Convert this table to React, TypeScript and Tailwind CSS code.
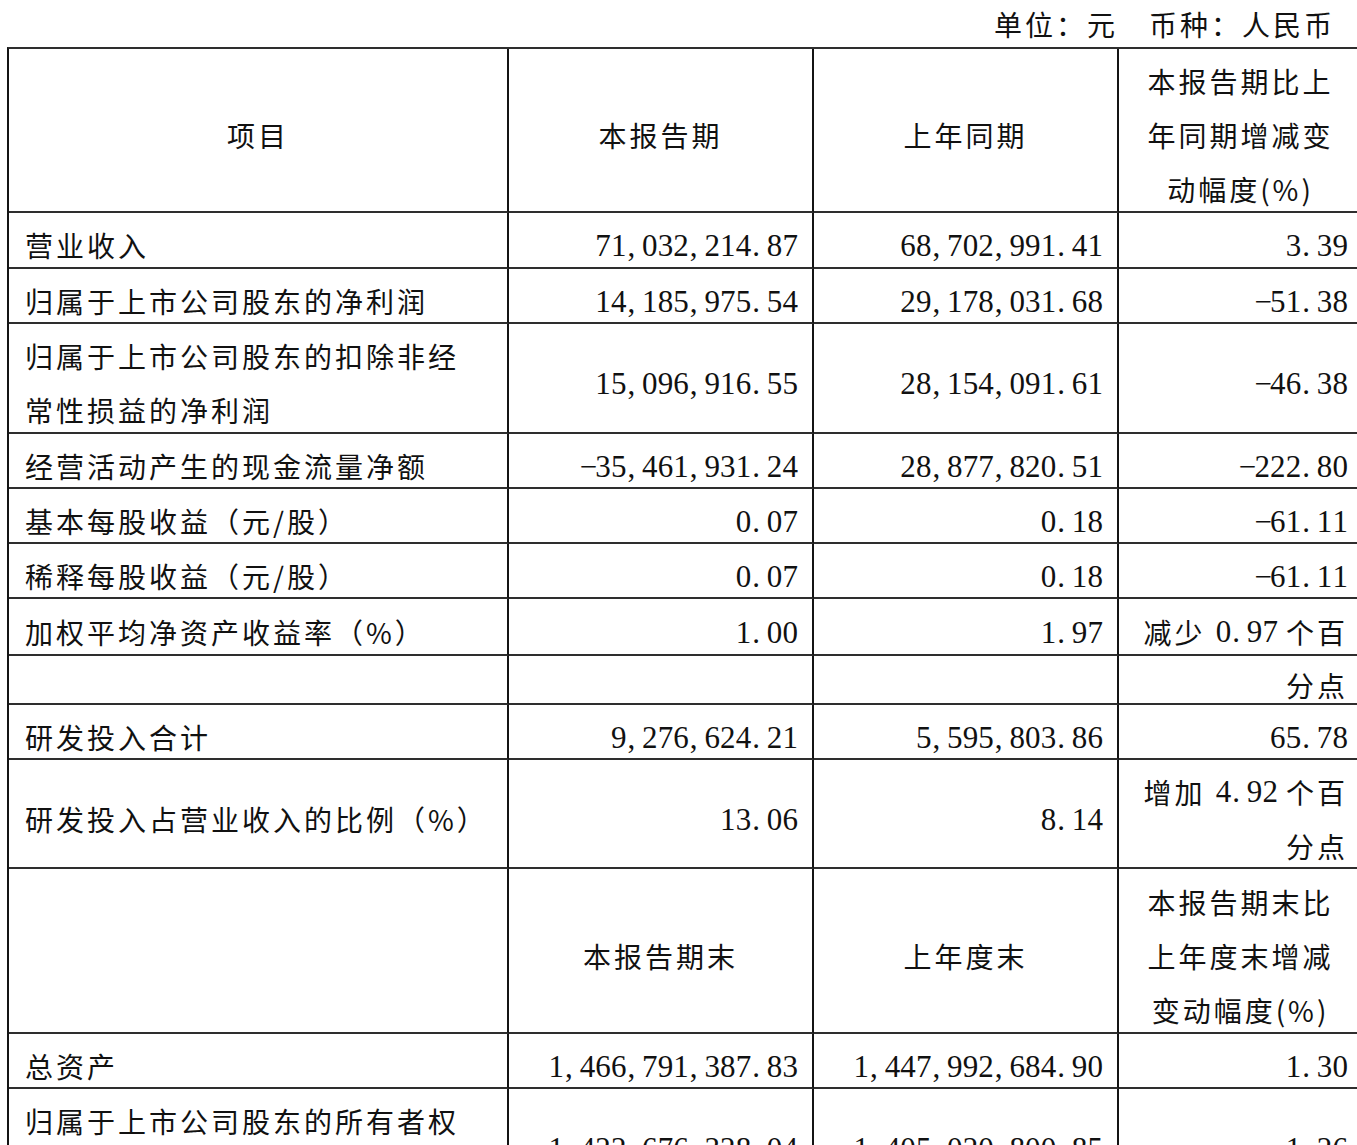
import React from 'react';

const CJK = "font-['Noto_Sans_CJK_SC','Noto_Sans_CJK_JP',sans-serif]";

function Num({ v }: { v: string }) {
  return (
    <span className="inline-flex font-['Liberation_Serif',serif] text-[31px] tracking-normal">
      {Array.from(v).map((c, i) => (
        <span
          key={i}
          className={
            c === ',' || c === '.'
              ? 'inline-block w-[15.6px] pl-[1px] text-left'
              : 'inline-block w-[15.6px] text-center'
          }
        >
          {c}
        </span>
      ))}
    </span>
  );
}

type Align = 'left' | 'right' | 'center';

function Cell({
  h,
  align,
  children,
}: {
  h: string;
  align: Align;
  children?: React.ReactNode;
}) {
  const j =
    align === 'left'
      ? 'justify-start pl-[16px] text-left'
      : align === 'right'
      ? 'justify-end pr-[14px] text-right'
      : 'justify-center text-center';
  return (
    <div
      className={`flex items-center pt-[10px] border-b-2 border-b-[#2e2e2e] border-r-2 border-r-[#141414] ${h} ${j}`}
    >
      <div className="leading-[54px]">{children}</div>
    </div>
  );
}

function Lines({ items }: { items: React.ReactNode[] }) {
  return (
    <>
      {items.map((t, i) => (
        <div key={i}>{t}</div>
      ))}
    </>
  );
}

export default function App() {
  return (
    <div className={`w-[1357px] h-[1145px] overflow-hidden bg-white text-[#111] ${CJK} text-[28px] tracking-[3px]`}>
      <div className="h-[47px] flex items-center justify-end pr-[22px]">
        <span>单位：元　币种：人民币</span>
      </div>
      <div className="ml-[7px] w-[1357px] grid grid-cols-[500px_305px_305px_245px] border-t-2 border-t-[#2e2e2e] border-l-2 border-l-[#141414]">
        {/* header */}
        <Cell h="h-[164px]" align="center">项目</Cell>
        <Cell h="h-[164px]" align="center">本报告期</Cell>
        <Cell h="h-[164px]" align="center">上年同期</Cell>
        <Cell h="h-[164px]" align="center">
          <Lines items={['本报告期比上', '年同期增减变', '动幅度(%)']} />
        </Cell>

        <Cell h="h-[56px]" align="left">营业收入</Cell>
        <Cell h="h-[56px]" align="right"><Num v="71,032,214.87" /></Cell>
        <Cell h="h-[56px]" align="right"><Num v="68,702,991.41" /></Cell>
        <Cell h="h-[56px]" align="right"><Num v="3.39" /></Cell>

        <Cell h="h-[55px]" align="left">归属于上市公司股东的净利润</Cell>
        <Cell h="h-[55px]" align="right"><Num v="14,185,975.54" /></Cell>
        <Cell h="h-[55px]" align="right"><Num v="29,178,031.68" /></Cell>
        <Cell h="h-[55px]" align="right"><Num v="−51.38" /></Cell>

        <Cell h="h-[110px]" align="left">
          <Lines items={['归属于上市公司股东的扣除非经', '常性损益的净利润']} />
        </Cell>
        <Cell h="h-[110px]" align="right"><Num v="15,096,916.55" /></Cell>
        <Cell h="h-[110px]" align="right"><Num v="28,154,091.61" /></Cell>
        <Cell h="h-[110px]" align="right"><Num v="−46.38" /></Cell>

        <Cell h="h-[55px]" align="left">经营活动产生的现金流量净额</Cell>
        <Cell h="h-[55px]" align="right"><Num v="−35,461,931.24" /></Cell>
        <Cell h="h-[55px]" align="right"><Num v="28,877,820.51" /></Cell>
        <Cell h="h-[55px]" align="right"><Num v="−222.80" /></Cell>

        <Cell h="h-[55px]" align="left">基本每股收益（元/股）</Cell>
        <Cell h="h-[55px]" align="right"><Num v="0.07" /></Cell>
        <Cell h="h-[55px]" align="right"><Num v="0.18" /></Cell>
        <Cell h="h-[55px]" align="right"><Num v="−61.11" /></Cell>

        <Cell h="h-[55px]" align="left">稀释每股收益（元/股）</Cell>
        <Cell h="h-[55px]" align="right"><Num v="0.07" /></Cell>
        <Cell h="h-[55px]" align="right"><Num v="0.18" /></Cell>
        <Cell h="h-[55px]" align="right"><Num v="−61.11" /></Cell>

        <Cell h="h-[57px]" align="left">加权平均净资产收益率（%）</Cell>
        <Cell h="h-[57px]" align="right"><Num v="1.00" /></Cell>
        <Cell h="h-[57px]" align="right"><Num v="1.97" /></Cell>
        <Cell h="h-[57px]" align="right">
          <span className="inline-flex items-center">
            减少<span className="inline-block w-[10px]" /><Num v="0.97" /><span className="inline-block w-[8px]" />个百
          </span>
        </Cell>

        <Cell h="h-[49px]" align="left" />
        <Cell h="h-[49px]" align="right" />
        <Cell h="h-[49px]" align="right" />
        <Cell h="h-[49px]" align="right">分点</Cell>

        <Cell h="h-[55px]" align="left">研发投入合计</Cell>
        <Cell h="h-[55px]" align="right"><Num v="9,276,624.21" /></Cell>
        <Cell h="h-[55px]" align="right"><Num v="5,595,803.86" /></Cell>
        <Cell h="h-[55px]" align="right"><Num v="65.78" /></Cell>

        <Cell h="h-[109px]" align="left">研发投入占营业收入的比例（%）</Cell>
        <Cell h="h-[109px]" align="right"><Num v="13.06" /></Cell>
        <Cell h="h-[109px]" align="right"><Num v="8.14" /></Cell>
        <Cell h="h-[109px]" align="right">
          <Lines
            items={[
              <span key="a" className="inline-flex items-center">
                增加<span className="inline-block w-[10px]" /><Num v="4.92" /><span className="inline-block w-[8px]" />个百
              </span>,
              '分点',
            ]}
          />
        </Cell>

        <Cell h="h-[165px]" align="center" />
        <Cell h="h-[165px]" align="center">本报告期末</Cell>
        <Cell h="h-[165px]" align="center">上年度末</Cell>
        <Cell h="h-[165px]" align="center">
          <Lines items={['本报告期末比', '上年度末增减', '变动幅度(%)']} />
        </Cell>

        <Cell h="h-[55px]" align="left">总资产</Cell>
        <Cell h="h-[55px]" align="right"><Num v="1,466,791,387.83" /></Cell>
        <Cell h="h-[55px]" align="right"><Num v="1,447,992,684.90" /></Cell>
        <Cell h="h-[55px]" align="right"><Num v="1.30" /></Cell>

        <Cell h="h-[110px]" align="left">
          <Lines items={['归属于上市公司股东的所有者权', '益']} />
        </Cell>
        <Cell h="h-[110px]" align="right"><Num v="1,422,676,328.04" /></Cell>
        <Cell h="h-[110px]" align="right"><Num v="1,405,020,800.85" /></Cell>
        <Cell h="h-[110px]" align="right"><Num v="1.26" /></Cell>
      </div>
    </div>
  );
}
